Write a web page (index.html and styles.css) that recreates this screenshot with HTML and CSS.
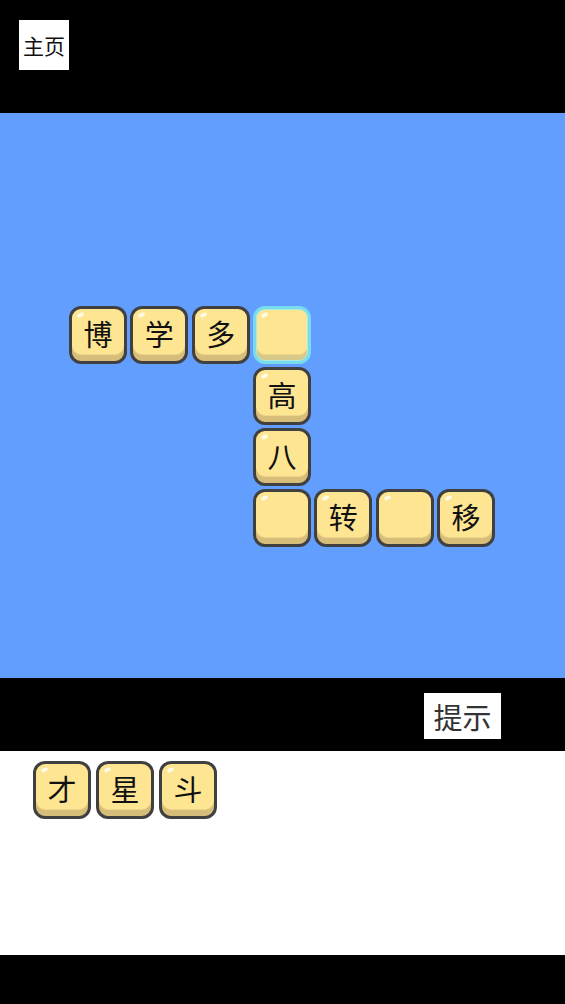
FILE: index.html
```html
<!DOCTYPE html>
<html lang="zh">
<head>
<meta charset="utf-8">
<title>成语填字</title>
<link rel="stylesheet" href="styles.css">
</head>
<body>
<div class="app">
  <header class="top">
    <button class="home">主页</button>
  </header>
  <main class="board">
    <div class="grid">
      <div class="tile" style="grid-column:1;grid-row:1">博</div>
      <div class="tile" style="grid-column:2;grid-row:1">学</div>
      <div class="tile" style="grid-column:3;grid-row:1">多</div>
      <div class="tile selected" style="grid-column:4;grid-row:1"></div>
      <div class="tile" style="grid-column:4;grid-row:2">高</div>
      <div class="tile" style="grid-column:4;grid-row:3">八</div>
      <div class="tile" style="grid-column:4;grid-row:4"></div>
      <div class="tile" style="grid-column:5;grid-row:4">转</div>
      <div class="tile" style="grid-column:6;grid-row:4"></div>
      <div class="tile" style="grid-column:7;grid-row:4">移</div>
    </div>
  </main>
  <div class="toolbar">
    <button class="hint">提示</button>
  </div>
  <section class="bank">
    <div class="tile">才</div>
    <div class="tile">星</div>
    <div class="tile">斗</div>
  </section>
  <footer class="bottom"></footer>
</div>
</body>
</html>
```

FILE: styles.css
```css
html, body {
  margin: 0;
  padding: 0;
  background: #000;
}
body {
  font-family: "Noto Sans CJK SC", "Noto Sans", sans-serif;
}
.app {
  width: 565px;
  height: 1004px;
  display: flex;
  flex-direction: column;
}
.top {
  height: 113px;
  background: #000;
  padding: 20px 0 0 19px;
  box-sizing: border-box;
}
.home {
  width: 50px;
  height: 50px;
  background: #fff;
  border: none;
  padding: 0;
  margin: 0;
  font-family: inherit;
  font-size: 21px;
  line-height: 50px;
  color: #111;
  cursor: pointer;
}
.board {
  height: 565px;
  background: #619efe;
  padding: 193px 0 0 69px;
  box-sizing: border-box;
}
.grid {
  display: grid;
  grid-template-columns: repeat(7, 58px);
  grid-template-rows: repeat(4, 58px);
  column-gap: 3.33px;
  row-gap: 3px;
}
.toolbar {
  height: 73px;
  background: #000;
  padding: 15px 0 0 424px;
  box-sizing: border-box;
}
.hint {
  width: 77px;
  height: 46px;
  background: #fff;
  border: none;
  padding: 0;
  margin: 0;
  font-family: inherit;
  font-size: 29px;
  line-height: 46px;
  color: #333;
  cursor: pointer;
}
.bank {
  height: 204px;
  background: #fff;
  padding: 10px 0 0 33px;
  box-sizing: border-box;
  display: flex;
  align-items: flex-start;
  gap: 5px;
}
.bottom {
  flex: 1;
  background: #000;
}
.tile {
  position: relative;
  width: 58px;
  height: 58px;
  box-sizing: border-box;
  border: 3px solid #404040;
  border-radius: 12px;
  background: #fee591;
  box-shadow: inset 0 -6px 0 #d6bd7a, inset 0 -7px 0 #f0d68a;
  font-size: 29px;
  line-height: 48px;
  text-align: center;
  color: #111;
}
.tile::before {
  content: "";
  position: absolute;
  left: 5px;
  top: 4px;
  width: 7px;
  height: 4px;
  border-radius: 50%;
  background: #fffbe8;
  transform: rotate(-25deg);
}
.tile.selected {
  border-color: #77dcee;
  box-shadow: inset 0 0 0 1px #a9ebe0, inset 0 -6px 0 #d6c98a, inset 0 -7px 0 #f0d68a;
}
```
